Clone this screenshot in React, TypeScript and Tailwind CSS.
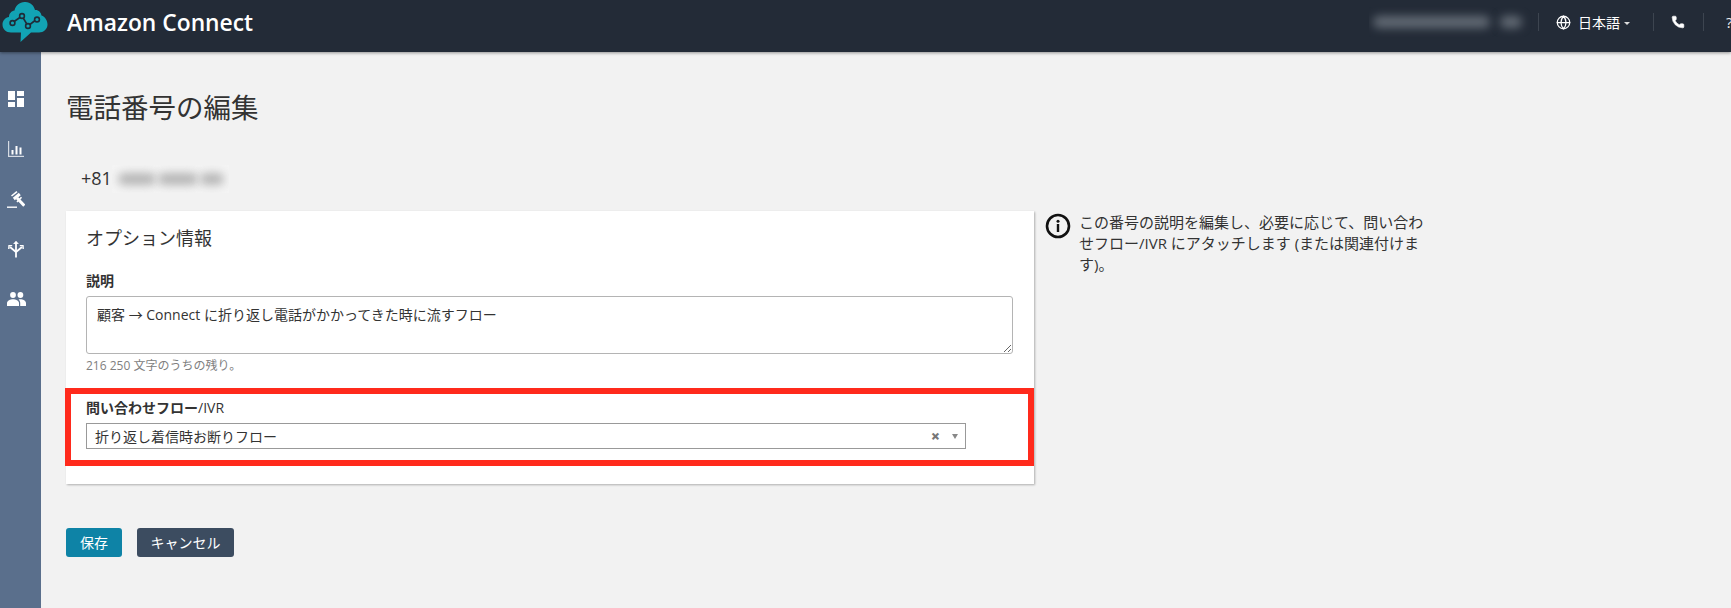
import { Phone, Globe } from 'lucide-react'

const fontStack = "font-['Open_Sans','Noto_Sans_CJK_JP',sans-serif]"

function Logo() {
  return (
    <svg width="46" height="42" viewBox="0 0 46 42" className="shrink-0">
      <path
        d="M18.5 41 L19 31.5 H9 C4 31.5 0.5 28 0.5 23.5 C0.5 19.5 3.5 16.5 7 16 C7 12.5 9.5 10 12.5 9.5 C13.5 4.5 18 0.5 23.5 1 C28.5 1.5 32 4.5 33 9 C36 8.5 39 11 39.5 14.5 C43 15.5 45.5 19.5 45.5 23.5 C45.5 28 41.5 31.5 37 31.5 H29 Z"
        fill="#12a3b4"
      />
      <path d="M10 22 L20 15 L26 25 L35 18" fill="none" stroke="#1f2b38" strokeWidth="1.6" />
      <circle cx="10.5" cy="22" r="2.4" fill="#12a3b4" stroke="#1f2b38" strokeWidth="1.6" />
      <circle cx="20" cy="15" r="2.4" fill="#12a3b4" stroke="#1f2b38" strokeWidth="1.6" />
      <circle cx="26" cy="25" r="2.4" fill="#12a3b4" stroke="#1f2b38" strokeWidth="1.6" />
      <circle cx="35" cy="18.5" r="2.4" fill="#12a3b4" stroke="#1f2b38" strokeWidth="1.6" />
    </svg>
  )
}

function DashboardIcon() {
  return (
    <svg width="16" height="16" viewBox="0 0 16 16" fill="#fff">
      <rect x="0" y="0" width="7" height="9" />
      <rect x="0" y="11" width="7" height="5" />
      <rect x="9" y="0" width="7" height="5" />
      <rect x="9" y="7" width="7" height="9" />
    </svg>
  )
}

function ChartIcon() {
  return (
    <svg width="16" height="16" viewBox="0 0 16 16" fill="#fff">
      <rect x="0" y="0" width="1.2" height="16" fill="#d5dbe3" />
      <rect x="0" y="14.8" width="16" height="1.2" fill="#d5dbe3" />
      <rect x="3.5" y="9" width="2" height="4.5" />
      <rect x="7.5" y="5" width="2" height="8.5" />
      <rect x="11.5" y="6.5" width="2" height="7" />
    </svg>
  )
}

function GavelIcon() {
  return (
    <svg width="18" height="17" viewBox="0 0 18 17" fill="none" stroke="#fff">
      <path d="M4.5 5 L10 0.6" strokeWidth="1.6" />
      <path d="M6.8 8 L12.8 3" strokeWidth="3" />
      <path d="M10 11 L14.5 6.2" strokeWidth="1.6" />
      <path d="M10 7 L17.3 14.6" strokeWidth="3" />
      <path d="M0 16.2 H10" strokeWidth="1.4" />
    </svg>
  )
}

function RoutingIcon() {
  return (
    <svg width="16" height="18" viewBox="0 0 16 18" fill="none" stroke="#fff" strokeWidth="1.8">
      <path d="M8 17.5 V2" />
      <path d="M5.6 4 L8 1.2 L10.4 4" fill="#fff" strokeWidth="0.8" />
      <path d="M8 12 L2 7" />
      <path d="M8 12 L14 7" />
      <path d="M0.8 9 L1 5.6 L4.2 5.6" strokeWidth="1.4" />
      <path d="M15.2 9 L15 5.6 L11.8 5.6" strokeWidth="1.4" />
    </svg>
  )
}

function PeopleIcon() {
  return (
    <svg width="19" height="14" viewBox="0 0 19 14" fill="#fff">
      <circle cx="6" cy="3" r="2.9" />
      <circle cx="13.4" cy="3" r="2.9" />
      <path d="M0 14 V11 C0 8.5 3.5 7.2 6 7.2 C8.5 7.2 12 8.5 12 11 V14 Z" />
      <path d="M13.2 14 V11 C13.2 9.6 12.6 8.4 11.6 7.5 C12.2 7.3 12.8 7.2 13.4 7.2 C15.8 7.2 19 8.5 19 11 V14 Z" />
    </svg>
  )
}

const sidebarItems = [DashboardIcon, ChartIcon, GavelIcon, RoutingIcon, PeopleIcon]

export default function App() {
  return (
    <div className={`${fontStack} flex h-screen flex-col overflow-hidden bg-[#f2f2f2] text-[#333]`}>
      <header className="relative z-10 flex h-[52px] shrink-0 items-center bg-[#232b37] pb-[8px] shadow-[0_1px_3px_rgba(0,0,0,0.4)]">
        <div className="ml-[2px] flex items-center">
          <Logo />
          <span className="ml-[19px] mt-[3px] text-[22.8px] font-semibold text-white">Amazon Connect</span>
        </div>
        <div className="ml-auto flex items-center">
          <div className="flex h-[30px] items-center gap-[10px] overflow-hidden pl-[4px] pr-[16px]">
            <span className="h-[12px] w-[117px] rounded-full bg-[#636b75] blur-[5px]" />
            <span className="h-[12px] w-[22px] rounded-full bg-[#636b75] blur-[5px]" />
          </div>
          <div className="flex h-[18px] w-[115px] items-center border-l border-[#3d4550] pl-[17px] text-[14px] text-white">
            <Globe size={15} strokeWidth={2} />
            <span className="ml-[7px]">日本語</span>
            <span className="ml-[4px] mt-[2px] h-0 w-0 border-x-[3.5px] border-t-[3.5px] border-x-transparent border-t-[#ddd]" />
          </div>
          <div className="flex h-[18px] w-[50px] items-center border-l border-[#3d4550] pl-[17px] text-white">
            <Phone size={14} fill="#fff" strokeWidth={1} />
          </div>
          <div className="flex h-[18px] w-[28px] items-center overflow-hidden border-l border-[#3d4550] pl-[22px] text-[15px] text-[#eee]">
            ?
          </div>
        </div>
      </header>

      <div className="flex min-h-0 flex-1">
        <nav className="flex w-[41px] shrink-0 flex-col items-center gap-[28px] bg-[#5a6f8c] pr-[9px] pt-[36px]">
          {sidebarItems.map((Icon, i) => (
            <div key={i} className="flex h-[22px] items-center justify-center">
              <Icon />
            </div>
          ))}
        </nav>

        <main className="flex-1 pl-[25px]">
          <h1 className="mt-[35px] text-[27.5px] leading-[42px] font-normal text-[#333]">電話番号の編集</h1>

          <div className="mt-[36px] flex h-[27px] items-center pl-[15px] text-[18px] text-[#333]">
            <span>+81</span>
            <div className="flex h-[28px] w-[117px] items-center gap-[2px] overflow-hidden bg-[#f4f4f4] pl-[6px]">
              <span className="h-[12px] w-[38px] shrink-0 rounded-full bg-[#b4b4b4] blur-[5px]" />
              <span className="h-[12px] w-[40px] shrink-0 rounded-full bg-[#b4b4b4] blur-[5px]" />
              <span className="h-[12px] w-[24px] shrink-0 rounded-full bg-[#b4b4b4] blur-[5px]" />
            </div>
          </div>

          <div className="mt-[19px] flex items-start">
            <section className="h-[273px] w-[968px] shrink-0 bg-white shadow-[1px_1px_2px_rgba(0,0,0,0.28)]">
              <h2 className="pl-[20px] pt-[15px] text-[18px] leading-[24px] font-normal text-[#333]">オプション情報</h2>

              <label className="mt-[21px] block pl-[20px] text-[14px] leading-[20px] font-bold text-[#333]">説明</label>
              <textarea
                readOnly
                defaultValue="顧客 → Connect に折り返し電話がかかってきた時に流すフロー"
                className="mx-[20px] mt-[5px] block h-[58px] w-[927px] rounded-[3px] border border-[#b4b4b4] px-[10px] py-[8px] text-[14px] leading-[20px] text-[#333] outline-none"
              />
              <p className="mt-[3px] pl-[20px] text-[12px] leading-[18px] text-[#808080]">216 250 文字のうちの残り。</p>

              <div className="ml-[-1px] mt-[13px] h-[78px] w-[969px] border-[6px] border-[#ff2a1c] pl-[15px] pt-[4px]">
                <div className="text-[14px] leading-[20px] font-bold text-[#333]">
                  問い合わせフロー<span className="font-normal">/IVR</span>
                </div>
                <div className="mt-[5px] flex h-[26px] w-[880px] items-center border border-[#999] pl-[8px] text-[14px] text-[#333]">
                  <span>折り返し着信時お断りフロー</span>
                  <span className="ml-auto mr-[12px] text-[16px] font-extrabold leading-none text-[#777]">×</span>
                  <span className="mr-[7px] h-0 w-0 border-x-[3px] border-t-[5px] border-x-transparent border-t-[#888]" />
                </div>
              </div>
            </section>

            <aside className="ml-[11px] flex w-[380px] items-start gap-[8px] pt-[1px]">
              <svg width="26" height="26" viewBox="0 0 26 26" className="mt-[1px] shrink-0" fill="none">
                <circle cx="13" cy="13" r="11" stroke="#111" strokeWidth="2.6" />
                <circle cx="13" cy="8.2" r="1.5" fill="#111" />
                <rect x="11.8" y="11" width="2.4" height="8" fill="#111" />
              </svg>
              <p className="w-[345px] text-[15px] leading-[21px] text-[#333]">
                この番号の説明を編集し、必要に応じて、問い合わせフロー/IVR にアタッチします (または関連付けます)。
              </p>
            </aside>
          </div>

          <div className="mt-[44px] flex gap-[15px]">
            <button className="h-[29px] w-[56px] rounded-[3px] bg-[#0e83a6] text-[14px] text-white">保存</button>
            <button className="h-[29px] w-[97px] rounded-[3px] bg-[#3c4c60] text-[14px] text-white">キャンセル</button>
          </div>
        </main>
      </div>
    </div>
  )
}
